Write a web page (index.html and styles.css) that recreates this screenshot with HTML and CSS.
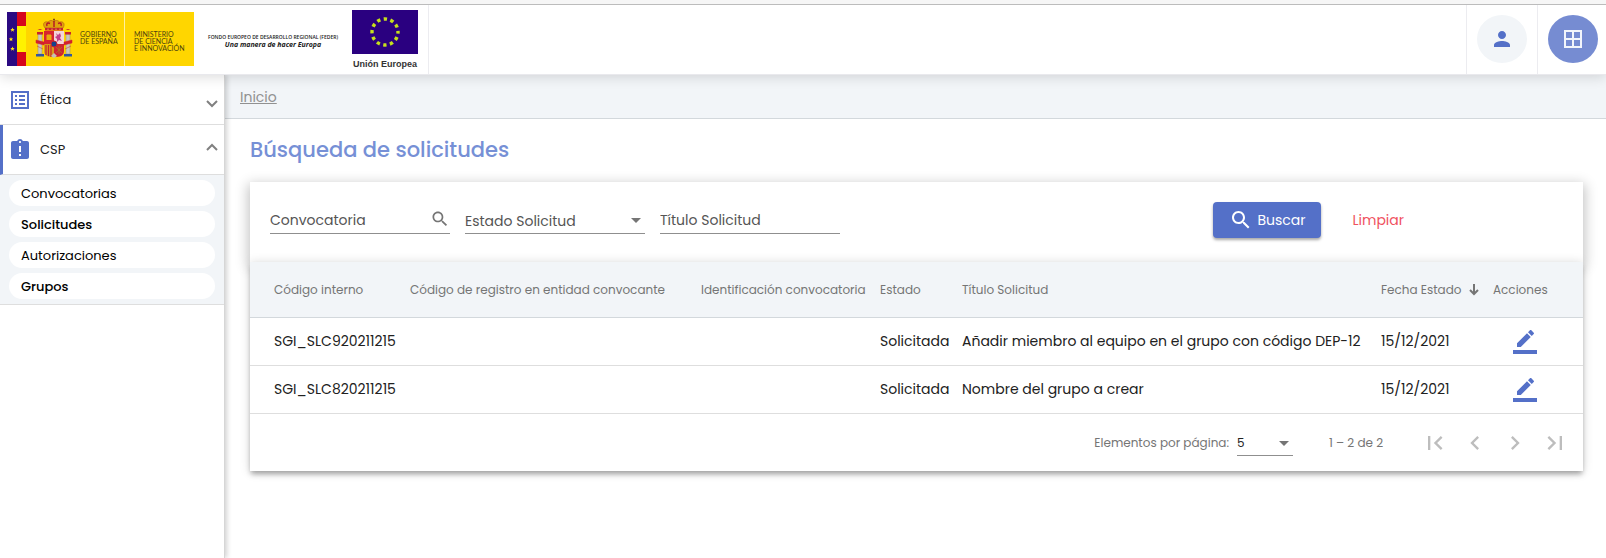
FILE: index.html
```html
<!DOCTYPE html>
<html lang="es">
<head>
<meta charset="utf-8">
<meta name="viewport" content="width=device-width, initial-scale=1">
<title>Búsqueda de solicitudes</title>
<link rel="stylesheet" href="styles.css">
</head>
<body>
<header class="topbar">
  <div class="logos">
    <svg class="logo-gov" viewBox="0 0 187 54" role="img" aria-label="Gobierno de España, Ministerio de Ciencia e Innovación">
      <rect width="187" height="54" fill="#ffd600"/>
      <rect width="10" height="54" fill="#2b0a82"/>
      <rect x="10" width="9" height="54" fill="#d6061c"/>
      <rect x="10" y="14" width="9" height="26" fill="#fff200"/>
      <rect x="117" width="1" height="54" fill="#fff0a0"/>
      <g fill="#ffe21a">
        <path d="M5.500 15.500l.6 1.500 1.600.1-1.200 1 .4 1.600-1.400-.9-1.400.9.4-1.600-1.200-1 1.600-.1z"/>
        <path d="M4 25l.6 1.500 1.600.1-1.200 1 .4 1.600L4 28.300l-1.400.9.400-1.600-1.200-1 1.600-.1z"/>
        <path d="M5.500 34.500l.6 1.500 1.600.1-1.200 1 .4 1.600-1.400-.9-1.400.9.4-1.600-1.200-1 1.600-.1z"/>
      </g>
      <g stroke-width=".5">
        <path d="M38 16c-3-4-1-7 3-6 2-2 4-2 5.500-.5C48 8 51 8 52.500 10c4-1 6 2 3.500 6z" fill="#e0a30c" stroke="#a8431c"/>
        <path d="M40 14c-1-3 1-3.500 3-2.500M54 14c1-3-1-3.500-3-2.500M47 9v6" fill="none" stroke="#b51d24" stroke-width="1.500"/>
        <path d="M47 6.500v3M46 7.500h2" stroke="#8a4a12" fill="none" stroke-width="1"/>
        <path d="M38 16h18v2.500H38z" fill="#c7242d"/>
        <path d="M40 17.200h2m2 0h2m2 0h2m2 0h2" stroke="#ffe26a"/>
        <path d="M37 19h10v13H37z" fill="#d8232f"/>
        <path d="M47 19h10v13H47z" fill="#f3d5da"/>
        <path d="M37 32h10v13c-6 0-10-1-10-6z" fill="#d99a19"/>
        <path d="M47 32h10v7c0 5-4 6-10 6z" fill="#cf2431"/>
        <path d="M39.500 23h1v-1h1v1h1v-1h1v1h1v5h-5z" fill="#e9a90f"/>
        <path d="M49 21l2 2 2-2 1 3-1 2 2 3-3-1-2 2v-3l-2-2 2-1z" fill="#c2408a"/>
        <path d="M39 33v10M41.500 33v11M44 33v12" stroke="#c7242d" stroke-width="1.200"/>
        <path d="M49 35l6 6m0-6l-6 6M52 34v8" stroke="#a9771f" stroke-width=".8"/>
        <circle cx="47" cy="32" r="3" fill="#16408c" stroke="#c7242d" stroke-width="1"/>
        <path d="M44 44l3-3 3 3-3 2z" fill="#c8c2b0"/>
        <g fill="#c9c7bd" stroke="#9c8e62">
          <path d="M31 22h4v20h-4zM59 22h4v20h-4z"/>
        </g>
        <path d="M30 20h6v2.500h-6zM58 20h6v2.500h-6zM30.500 18h5l-2.500-1zM58.500 18h5l-2.500-1z" fill="#c7242d"/>
        <path d="M29 42h8v2.500h-8zM57 42h8v2.500h-8z" fill="#3157a0"/>
        <path d="M29 28l8 2v3l-8-2zM65 28l-8 2v3l8-2zM30 34l6 3M64 34l-6 3" fill="#d2202c" stroke="#d2202c"/>
      </g>
      <g class="gov-text">
        <text x="73" y="25">GOBIERNO</text>
        <text x="73" y="32">DE ESPAÑA</text>
        <text x="127" y="25">MINISTERIO</text>
        <text x="127" y="32">DE CIENCIA</text>
        <text x="127" y="39">E INNOVACIÓN</text>
      </g>
    </svg>
    <div class="feder">
      <div class="feder-fund">FONDO EUROPEO DE DESARROLLO REGIONAL (FEDER)</div>
      <div class="feder-motto">Una manera de hacer Europa</div>
    </div>
    <div class="eu">
      <svg class="eu-flag" viewBox="0 0 66 44" aria-hidden="true">
        <rect width="66" height="44" fill="#2a0080"/>
        <circle cx="33" cy="22" r="13" fill="none" stroke="#c6e01c" stroke-width="3.400" stroke-dasharray="3.400 3.407" stroke-dashoffset="1.700"/>
      </svg>
      <div class="eu-name">Unión Europea</div>
    </div>
  </div>
  <div class="top-cell">
    <button class="round" type="button" aria-label="Usuario">
      <svg class="ico" viewBox="0 0 24 24"><path d="M12 12c2.210 0 4-1.790 4-4s-1.790-4-4-4-4 1.790-4 4 1.790 4 4 4zm0 2c-2.670 0-8 1.340-8 4v2h16v-2c0-2.660-5.330-4-8-4z"/></svg>
    </button>
  </div>
  <div class="top-cell">
    <button class="round round-apps" type="button" aria-label="Módulos">
      <svg class="ico" viewBox="0 0 24 24"><path fill-rule="evenodd" d="M3 3h18v18H3zM5 5v6h6V5zm8 0v6h6V5zm-8 8v6h6v-6zm8 0v6h6v-6z"/></svg>
    </button>
  </div>
</header>

<div class="layout">
  <nav class="sidebar" aria-label="Menú">
    <button class="menu-row" type="button" aria-expanded="false">
      <svg class="ico menu-ico" viewBox="0 0 24 24"><path fill-rule="evenodd" d="M3 3h18v18H3zM5 5v14h14V5zM11 7h6v2h-6zM11 11h6v2h-6zM11 15h6v2h-6zM7 7h2v2H7zM7 11h2v2H7zM7 15h2v2H7z"/></svg>
      <span class="menu-text">Ética</span>
      <svg class="chev chev-down" viewBox="0 0 12 8"><path d="M1 1l5 5 5-5"/></svg>
    </button>
    <button class="menu-row menu-row-active" type="button" aria-expanded="true">
      <svg class="ico menu-ico" viewBox="0 0 24 24"><path d="M19 3h-4.180C14.400 1.840 13.300 1 12 1c-1.300 0-2.400.84-2.820 2H5c-1.100 0-2 .9-2 2v14c0 1.100.9 2 2 2h14c1.100 0 2-.9 2-2V5c0-1.100-.9-2-2-2zm-6 15h-2v-2h2v2zm0-4h-2V8h2v6zm-1-9c-.55 0-1-.45-1-1s.45-1 1-1 1 .45 1 1-.45 1-1 1z"/></svg>
      <span class="menu-text">CSP</span>
      <svg class="chev" viewBox="0 0 12 8"><path d="M1 7l5-5 5 5"/></svg>
    </button>
    <div class="submenu">
      <a class="pill" href="#convocatorias">Convocatorias</a>
      <a class="pill pill-strong" href="#solicitudes">Solicitudes</a>
      <a class="pill" href="#autorizaciones">Autorizaciones</a>
      <a class="pill pill-strong" href="#grupos">Grupos</a>
    </div>
  </nav>

  <main class="main">
    <div class="crumbs"><a class="crumb" href="#inicio">Inicio</a></div>
    <div class="content">
      <h1 class="title">Búsqueda de solicitudes</h1>
      <form class="filters">
        <div class="field">
          <input class="control" type="text" placeholder="Convocatoria" aria-label="Convocatoria">
          <svg class="field-search" viewBox="0 0 24 24"><path d="M15.500 14h-.79l-.28-.27C15.410 12.590 16 11.110 16 9.500 16 5.910 13.090 3 9.500 3S3 5.910 3 9.500 5.910 16 9.500 16c1.610 0 3.090-.59 4.230-1.570l.27.28v.79l5 4.990L20.490 19l-4.990-5zm-6 0C7.010 14 5 11.990 5 9.500S7.010 5 9.500 5 14 7.010 14 9.500 11.990 14 9.500 14z"/></svg>
        </div>
        <div class="field">
          <select class="control" aria-label="Estado Solicitud"><option>Estado Solicitud</option></select>
          <svg class="caret" viewBox="0 0 10 5"><path d="M0 0h10L5 5z"/></svg>
        </div>
        <div class="field">
          <input class="control" type="text" placeholder="Título Solicitud" aria-label="Título Solicitud">
        </div>
        <div class="actions">
          <button class="btn-search" type="button">
            <svg class="ico" viewBox="0 0 24 24"><path d="M15.500 14h-.79l-.28-.27C15.410 12.590 16 11.110 16 9.500 16 5.910 13.090 3 9.500 3S3 5.910 3 9.500 5.910 16 9.500 16c1.610 0 3.090-.59 4.230-1.570l.27.28v.79l5 4.990L20.490 19l-4.990-5zm-6 0C7.010 14 5 11.990 5 9.500S7.010 5 9.500 5 14 7.010 14 9.500 11.990 14 9.500 14z"/></svg>
            Buscar
          </button>
          <button class="btn-clear" type="reset">Limpiar</button>
        </div>
      </form>

      <section class="results">
        <table class="grid">
          <colgroup>
            <col class="c-code"><col class="c-reg"><col class="c-ident"><col class="c-state"><col><col class="c-date"><col class="c-act">
          </colgroup>
          <thead>
            <tr>
              <th>Código interno</th>
              <th>Código de registro en entidad convocante</th>
              <th>Identificación convocatoria</th>
              <th>Estado</th>
              <th>Título Solicitud</th>
              <th><span class="sorted">Fecha Estado <svg class="sort" viewBox="0 0 10 12"><path d="M5 0v10M1 6l4 4 4-4"/></svg></span></th>
              <th>Acciones</th>
            </tr>
          </thead>
          <tbody>
            <tr>
              <td>SGI_SLC920211215</td><td></td><td></td><td>Solicitada</td>
              <td>Añadir miembro al equipo en el grupo con código DEP-12</td><td>15/12/2021</td>
              <td><button class="edit" type="button" aria-label="Editar"><svg class="ico" viewBox="0 0 24 24"><path d="M17.750 7L14 3.250l-10 10V17h3.750l10-10zm2.960-2.960c.39-.39.39-1.020 0-1.410L18.370.29c-.39-.39-1.020-.39-1.410 0L15 2.250 18.750 6l1.960-1.960zM0 20h24v4H0z"/></svg></button></td>
            </tr>
            <tr>
              <td>SGI_SLC820211215</td><td></td><td></td><td>Solicitada</td>
              <td>Nombre del grupo a crear</td><td>15/12/2021</td>
              <td><button class="edit" type="button" aria-label="Editar"><svg class="ico" viewBox="0 0 24 24"><path d="M17.750 7L14 3.250l-10 10V17h3.750l10-10zm2.960-2.960c.39-.39.39-1.020 0-1.410L18.370.29c-.39-.39-1.020-.39-1.410 0L15 2.250 18.750 6l1.960-1.960zM0 20h24v4H0z"/></svg></button></td>
            </tr>
          </tbody>
        </table>
        <div class="pager">
          <label class="pager-label" for="size">Elementos por página:</label>
          <div class="size-field">
            <select class="size" id="size"><option>5</option></select>
            <svg class="caret" viewBox="0 0 10 5"><path d="M0 0h10L5 5z"/></svg>
          </div>
          <span class="range">1 – 2 de 2</span>
          <div class="pages">
            <button class="page" type="button" disabled aria-label="Primera página"><svg class="page-ico" viewBox="0 0 24 24"><path d="M18.410 16.590L13.820 12l4.590-4.590L17 6l-6 6 6 6zM6 6h2v12H6z"/></svg></button>
            <button class="page" type="button" disabled aria-label="Página anterior"><svg class="page-ico" viewBox="0 0 24 24"><path d="M15.410 7.410L14 6l-6 6 6 6 1.410-1.410L10.830 12z"/></svg></button>
            <button class="page" type="button" disabled aria-label="Página siguiente"><svg class="page-ico" viewBox="0 0 24 24"><path d="M10 6L8.590 7.410 13.170 12l-4.580 4.590L10 18l6-6z"/></svg></button>
            <button class="page" type="button" disabled aria-label="Última página"><svg class="page-ico" viewBox="0 0 24 24"><path d="M5.590 7.410L10.180 12l-4.590 4.590L7 18l6-6-6-6zM16 6h2v12h-2z"/></svg></button>
          </div>
        </div>
      </section>
    </div>
  </main>
</div>
</body>
</html>
```
FILE: styles.css
```css
* { box-sizing: border-box; }

body {
  margin: 0;
  min-height: 100vh;
  display: flex;
  flex-direction: column;
  font-family: Poppins, Inter, sans-serif;
  font-size: 14px;
  color: #212121;
  background: #fff;
}

button, input, select { font: inherit; color: inherit; }
button { border: 0; padding: 0; background: none; cursor: pointer; }
svg { display: block; flex: none; }
.ico { width: 24px; height: 24px; fill: currentColor; }

/* Header */
.topbar {
  position: relative;
  z-index: 2;
  display: flex;
  align-items: stretch;
  height: 75px;
  border-top: 4px solid #f6f6f6;
  border-bottom: 1px solid #e9e9ed;
  background: #fff;
  box-shadow: 0 2px 12px rgba(0, 0, 0, .14);
}
.topbar::before {
  content: "";
  position: absolute;
  inset: 0 0 auto;
  height: 1px;
  background: #bcbcbc;
}
.logos {
  display: flex;
  align-items: center;
  gap: 10px;
  margin-right: auto;
  padding: 0 10px 0 7px;
  border-right: 1px solid #ececf0;
}
.logo-gov { width: 187px; height: 54px; }
.gov-text { font: 7px Lato, sans-serif; fill: #4a4210; }
.feder { width: 138px; padding-top: 4px; text-align: center; white-space: nowrap; color: #222; }
.feder-fund { font: 600 5px/8px "Open Sans", sans-serif; }
.feder-motto { font: italic bold 7px/8px "Open Sans", sans-serif; }
.eu { display: flex; flex-direction: column; align-items: center; gap: 5px; width: 66px; }
.eu-flag { width: 66px; height: 44px; }
.eu-name { font: bold 9px/10px "Liberation Sans", sans-serif; color: #333; white-space: nowrap; }

.top-cell {
  display: flex;
  align-items: center;
  padding: 0 10px;
  border-left: 1px solid #ececf0;
}
.top-cell:last-child { padding-right: 8px; }
.round {
  display: flex;
  align-items: center;
  justify-content: center;
  width: 50px;
  height: 48px;
  margin-bottom: 1px;
  border-radius: 50%;
  background: #f2f5f8;
  color: #5470c8;
}
.round-apps { background: #768cd2; color: #f2f5fb; }

/* Sidebar */
.layout { display: flex; flex: 1; }
.sidebar {
  position: relative;
  z-index: 1;
  width: 225px;
  flex: none;
  border-right: 1px solid #d6d6d6;
  background: #fff;
  box-shadow: 2px 0 5px rgba(0, 0, 0, .18);
}
.menu-row {
  display: flex;
  align-items: center;
  width: 100%;
  height: 50px;
  padding: 0 6px 0 8px;
  border-bottom: 1px solid #dedede;
  font-size: 13px;
  text-align: left;
}
.menu-row-active { padding-left: 5px; border-left: 3px solid #5470c8; }
.menu-ico { color: #5470c8; }
.menu-text { flex: 1; margin-left: 8px; }
.chev { width: 12px; height: 8px; margin-bottom: 6px; fill: none; stroke: #808080; stroke-width: 2; }
.chev-down { margin: 8px 0 0; }
.submenu {
  display: flex;
  flex-direction: column;
  gap: 5px;
  padding: 5px 9px;
  border-bottom: 1px solid #dedede;
  background: #f2f5f8;
}
.pill {
  padding: 1px 12px 0;
  border-radius: 13px;
  background: #fff;
  color: #000;
  font-size: 13px;
  line-height: 25px;
  text-decoration: none;
}
.pill-strong { font-weight: 500; }

/* Content */
.main { flex: 1; min-width: 0; }
.crumbs {
  height: 44px;
  padding: 0 15px;
  border-bottom: 1px solid #d3d8dc;
  background: #f2f5f8;
  line-height: 44px;
}
.crumb { color: #919191; }
.content { padding: 16px 23px 24px 25px; }
.title { margin: 0 0 17px; font-size: 21px; line-height: 30px; font-weight: 500; color: #7690d6; }

.filters {
  display: flex;
  align-items: flex-start;
  gap: 15px;
  height: 80px;
  padding: 20px 163px 0 20px;
  background: #fff;
  box-shadow: 0 4px 12px 2px rgba(0, 0, 0, .24);
}
.field { position: relative; width: 180px; border-bottom: 1px solid #8f8f8f; }
.control {
  display: block;
  width: 100%;
  height: 31px;
  padding: 6px 24px 0 0;
  border: 0;
  outline: 0;
  border-radius: 0;
  background: none;
  appearance: none;
  color: #555;
}
.control::placeholder { color: #555; opacity: 1; }
.field-search { position: absolute; right: 0; top: 7px; width: 20px; height: 20px; fill: #757575; }
.caret { position: absolute; right: 4px; top: 16px; width: 10px; height: 5px; fill: #757575; pointer-events: none; }
.actions { display: flex; gap: 16px; margin-left: auto; }
.btn-search {
  display: flex;
  align-items: center;
  gap: 4px;
  height: 36px;
  padding: 0 16px;
  border-radius: 4px;
  background: #5470c8;
  color: #fff;
  box-shadow: 0 2px 3px rgba(0, 0, 0, .35);
}
.btn-clear { height: 36px; padding: 0 16px 0 15px; color: #f0525f; }

.results {
  position: relative;
  background: #fff;
  box-shadow: 0 4px 5px -1px rgba(0, 0, 0, .3), 0 1px 10px rgba(0, 0, 0, .16);
}
.grid { width: 100%; border-collapse: separate; border-spacing: 0; table-layout: fixed; }
.c-code { width: 160px; }
.c-reg { width: 291px; }
.c-ident { width: 179px; }
.c-state { width: 82px; }
.c-date { width: 112px; }
.c-act { width: 90px; }
.grid th {
  height: 56px;
  padding: 0;
  border-bottom: 1px solid #d3d8dc;
  background: #f2f5f8;
  color: #757575;
  font-size: 12px;
  font-weight: 400;
  text-align: left;
  white-space: nowrap;
}
.grid td { height: 48px; padding: 0; border-bottom: 1px solid #dedede; white-space: nowrap; }
.grid th:first-child, .grid td:first-child { padding-left: 24px; }
.grid td:last-child { padding-left: 20px; }
.sorted { display: flex; align-items: center; gap: 8px; }
.sort { width: 10px; height: 12px; fill: none; stroke: #757575; stroke-width: 2; }
.edit { display: block; color: #5470c8; }

.pager {
  display: flex;
  align-items: center;
  justify-content: flex-end;
  height: 57px;
  padding-right: 8px;
  font-size: 12px;
  color: #757575;
}
.pager-label { margin-right: 8px; }
.size-field { position: relative; width: 56px; border-bottom: 1px solid #8f8f8f; }
.size {
  display: block;
  width: 100%;
  height: 25px;
  padding: 0;
  border: 0;
  background: none;
  appearance: none;
  color: #212121;
}
.size-field .caret { top: 11px; }
.range { width: 54px; margin: 0 32px 0 36px; white-space: nowrap; }
.pages { display: flex; }
.page { display: flex; align-items: center; justify-content: center; width: 40px; height: 40px; color: #bdbdbd; cursor: default; }
.page-ico { width: 28px; height: 28px; fill: currentColor; }
```
